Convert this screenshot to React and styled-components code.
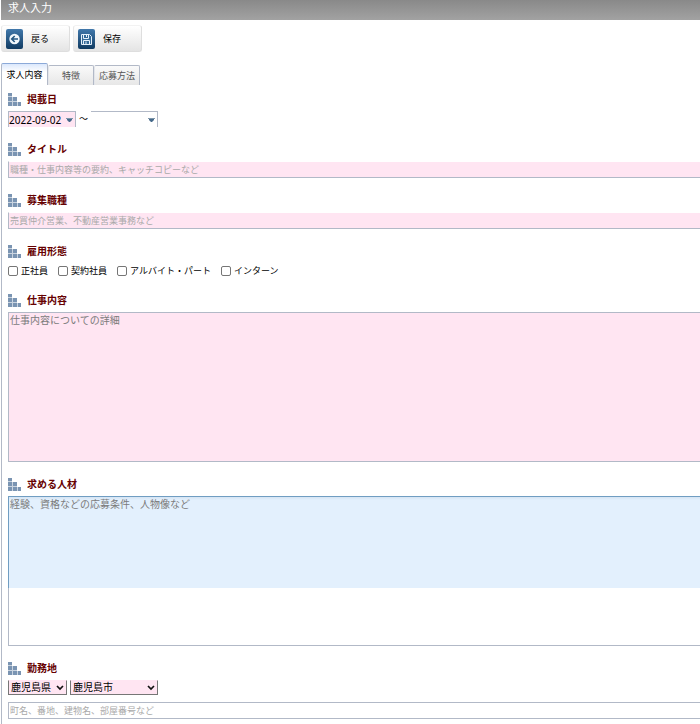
import React from "react";
import styled, { createGlobalStyle, css } from "styled-components";

const GlobalStyle = createGlobalStyle`
  *, *::before, *::after { box-sizing: border-box; }
  body {
    margin: 0;
    background: #fff;
    color: #000;
    font: 10px/14px "Noto Sans", "Noto Sans CJK JP", sans-serif;
    overflow-x: hidden;
  }
  button, input, select, textarea { font: inherit; color: inherit; margin: 0; }
`;

const line = "#b2b9c7";
const pink = "#ffe5f2";

const Page = styled.div`
  padding-left: 1px;
`;

const TitleBar = styled.header`
  display: flex;
  align-items: center;
  height: 20px;
  padding: 0 7px 4px;
  background: linear-gradient(#898989, #a2a2a2);
`;

const PageTitle = styled.h1`
  margin: 0;
  font-size: 11px;
  line-height: 16px;
  font-weight: 400;
  color: #fff;
`;

const Toolbar = styled.div`
  display: flex;
  gap: 3px;
  padding: 5px 0 0;
`;

const ToolButton = styled.button`
  display: flex;
  align-items: center;
  gap: 8px;
  width: 69px;
  height: 27px;
  padding: 0 4px;
  border: 1px solid #dedede;
  border-top-color: #f2f2f2;
  border-left-color: #e8e8e8;
  border-radius: 3px;
  background: linear-gradient(#fff, #e4e4e4);
  font-size: 9px;
`;

const ToolIcon = styled.svg`
  flex: none;
  width: 17px;
  height: 20px;
`;

const Tabs = styled.div`
  display: flex;
  align-items: flex-end;
  height: 22px;
  margin-top: 11px;
`;

const Tab = styled.button`
  width: 46px;
  height: 20px;
  padding: 0;
  border: 1px solid ${line};
  border-left-color: #e3e5ea;
  border-bottom: 0;
  border-radius: 2px 2px 0 0;
  background: linear-gradient(#fafafa, #e7e7e7);
  font-size: 9px;
  color: #555;
  white-space: nowrap;

  ${(p) =>
    p.$active &&
    css`
      width: 47px;
      height: 22px;
      border-color: #8ba9d8 ${line} ${line};
      background: linear-gradient(#dbe8fc, #fff 8px);
      color: #000;
    `}
`;

const Panel = styled.main`
  display: flex;
  flex-direction: column;
  gap: 10px;
  padding: 2px 0 5px 6px;
  border-left: 1px solid ${line};
`;

const Section = styled.section`
  display: flex;
  flex-direction: column;
`;

const SectionHead = styled.div`
  display: flex;
  align-items: center;
  gap: 6px;
  height: 24px;
`;

const Heading = styled.h2`
  margin: 0;
  font-size: 10px;
  line-height: 14px;
  font-weight: 700;
  color: #600;
`;

const BarsIcon = styled.svg`
  width: 13px;
  height: 13px;
  fill: #7a94b2;
`;

const TextInput = styled.input`
  width: 100%;
  height: 17px;
  padding: 0 1px;
  border: solid ${line};
  border-width: 1px 0 1px 1px;
  border-radius: 0;
  background: #fff;
  font-size: 9px;
  ${(p) =>
    p.$required &&
    css`
      border-top-color: #fff;
      background: ${pink};
    `}
  &::placeholder { color: #a9a9a9; opacity: 1; }
`;

const TextArea = styled.textarea`
  display: block;
  width: 100%;
  height: 150px;
  padding: 0 1px;
  border: solid ${line};
  border-width: 1px 0 1px 1px;
  border-radius: 0;
  resize: none;
  background: ${(p) =>
    p.$highlight ? "linear-gradient(#d5e4f3, #e3f0fd 3px 91px, #fff 91px)" : pink};
  ${(p) => p.$highlight && `border-image: linear-gradient(#709dc2 92px, ${line} 92px) 1;`}
  &::placeholder { color: #7b7b7b; opacity: 1; }
`;

const Row = styled.div`
  display: flex;
  align-items: center;
  gap: 3px;
`;

const Tilde = styled.span`
  font-size: 9px;
`;

const DateBox = styled.div`
  display: flex;
  align-items: center;
  width: 68px;
  height: 16px;
  border: 1px solid ${line};
  border-bottom: 0;
  background: ${(p) => (p.$required ? pink : "#fff")};
  ${(p) => !p.$required && "width: 67px; border-left: 0;"}
`;

const DateInput = styled.input`
  flex: 1;
  min-width: 0;
  height: 15px;
  padding: 0;
  border: 0;
  background: transparent;
`;

const DateToggle = styled.button`
  display: flex;
  flex: none;
  padding: 0 2px 0 0;
  border: 0;
  background: transparent;
`;

const Checks = styled.div`
  display: flex;
  gap: 10px;
  height: 15px;
`;

const CheckLabel = styled.label`
  display: flex;
  align-items: center;
  gap: 3px;
  font-size: 9px;
`;

const CheckBox = styled.input`
  appearance: none;
  width: 10px;
  height: 10px;
  border: 1px solid #767676;
  border-radius: 2px;
  background: #fff;
  &:checked { background: #4a7093; }
`;

const SelectBox = styled.div`
  display: grid;
  align-items: center;
  width: ${(p) => (p.$wide ? "88px" : "59px")};
  & > * { grid-area: 1 / 1; }
`;

const Select = styled.select`
  appearance: none;
  width: 100%;
  height: 15px;
  padding: 0 12px 0 2px;
  border: 1px solid #767676;
  border-top-color: ${pink};
  border-radius: 0;
  background-color: ${pink};
  line-height: 13px;
`;

const Chevron = styled.svg`
  justify-self: end;
  width: 8px;
  height: 6px;
  margin-right: 3px;
  pointer-events: none;
`;

const AddressRow = styled.div`
  margin-top: 7px;
`;

function BackIcon() {
  return (
    <ToolIcon viewBox="0 0 17 20" aria-hidden="true">
      <defs>
        <linearGradient id="backFill" x1="0" y1="0" x2="0" y2="1">
          <stop offset="0" stopColor="#4178ab" />
          <stop offset="1" stopColor="#103b62" />
        </linearGradient>
      </defs>
      <rect width="17" height="20" rx="2" fill="url(#backFill)" />
      <circle cx="8.5" cy="10" r="5.2" fill="#f1f7fc" />
      <path d="M12 10H6M8.7 7L5.7 10l3 3" fill="none" stroke="#245782" strokeWidth="1.6" />
    </ToolIcon>
  );
}

function SaveIcon() {
  return (
    <ToolIcon viewBox="0 0 17 20" aria-hidden="true">
      <defs>
        <linearGradient id="saveFill" x1="0" y1="0" x2="0" y2="1">
          <stop offset="0" stopColor="#4178ab" />
          <stop offset="1" stopColor="#103b62" />
        </linearGradient>
      </defs>
      <rect width="17" height="20" rx="2" fill="url(#saveFill)" />
      <path d="M3.5 5.5h8l2 2v8h-10z" fill="#356a98" stroke="#e6f1fb" />
      <path d="M5.5 5.5v4h5v-4M5.5 15.5v-4h6v4" fill="none" stroke="#e6f1fb" />
      <path d="M8.5 6v2M8 12.5v3" stroke="#e6f1fb" />
    </ToolIcon>
  );
}

function DropButton({ label }) {
  return (
    <DateToggle type="button" aria-label={label}>
      <svg width="7" height="6" viewBox="0 0 7 6" aria-hidden="true">
        <path d="M0 1h7v1H0z" fill="#7f97ab" />
        <path d="M1 2h5v1L4 5H3L1 3z" fill="#45698a" />
      </svg>
    </DateToggle>
  );
}

function SelectField({ label, value, wide }) {
  return (
    <SelectBox $wide={wide}>
      <Select aria-label={label}>
        <option>{value}</option>
      </Select>
      <Chevron viewBox="0 0 8 6" aria-hidden="true">
        <path d="M1 1l3 3 3-3" fill="none" stroke="#111" strokeWidth="1.7" />
      </Chevron>
    </SelectBox>
  );
}

function Field({ title, children }) {
  return (
    <Section>
      <SectionHead>
        <BarsIcon viewBox="0 0 13 13" aria-hidden="true">
          <path d="M0 0h4v3H0zM0 4h4v4H0zM0 9h4v4H0zM5 4h4v4H5zM5 9h4v4H5zM10 9h3v4h-3z" />
          <path d="M0 3h4v1H0zM0 8h4v1H0zM4 4h1v9H4zM5 8h4v1H5zM9 9h1v4H9z" opacity="0.4" />
        </BarsIcon>
        <Heading>{title}</Heading>
      </SectionHead>
      {children}
    </Section>
  );
}

const jobTypes = ["正社員", "契約社員", "アルバイト・パート", "インターン"];

export default function App() {
  return (
    <Page>
      <GlobalStyle />
      <TitleBar>
        <PageTitle>求人入力</PageTitle>
      </TitleBar>
      <Toolbar>
        <ToolButton type="button"><BackIcon />戻る</ToolButton>
        <ToolButton type="button"><SaveIcon />保存</ToolButton>
      </Toolbar>
      <Tabs role="tablist">
        <Tab type="button" role="tab" aria-selected="true" $active>求人内容</Tab>
        <Tab type="button" role="tab" aria-selected="false">特徴</Tab>
        <Tab type="button" role="tab" aria-selected="false">応募方法</Tab>
      </Tabs>
      <Panel>
        <Field title="掲載日">
          <Row>
            <DateBox $required>
              <DateInput aria-label="掲載開始日" defaultValue="2022-09-02" />
              <DropButton label="開始日を選択" />
            </DateBox>
            <Tilde>～</Tilde>
            <DateBox>
              <DateInput aria-label="掲載終了日" />
              <DropButton label="終了日を選択" />
            </DateBox>
          </Row>
        </Field>
        <Field title="タイトル">
          <TextInput $required aria-label="タイトル" placeholder="職種・仕事内容等の要約、キャッチコピーなど" />
        </Field>
        <Field title="募集職種">
          <TextInput $required aria-label="募集職種" placeholder="売買仲介営業、不動産営業事務など" />
        </Field>
        <Field title="雇用形態">
          <Checks>
            {jobTypes.map((name) => (
              <CheckLabel key={name}>
                <CheckBox type="checkbox" />
                {name}
              </CheckLabel>
            ))}
          </Checks>
        </Field>
        <Field title="仕事内容">
          <TextArea aria-label="仕事内容" placeholder="仕事内容についての詳細" />
        </Field>
        <Field title="求める人材">
          <TextArea $highlight aria-label="求める人材" placeholder="経験、資格などの応募条件、人物像など" />
        </Field>
        <Field title="勤務地">
          <Row>
            <SelectField label="都道府県" value="鹿児島県" />
            <SelectField label="市区町村" value="鹿児島市" wide />
          </Row>
          <AddressRow>
            <TextInput aria-label="住所" placeholder="町名、番地、建物名、部屋番号など" />
          </AddressRow>
        </Field>
      </Panel>
    </Page>
  );
}
